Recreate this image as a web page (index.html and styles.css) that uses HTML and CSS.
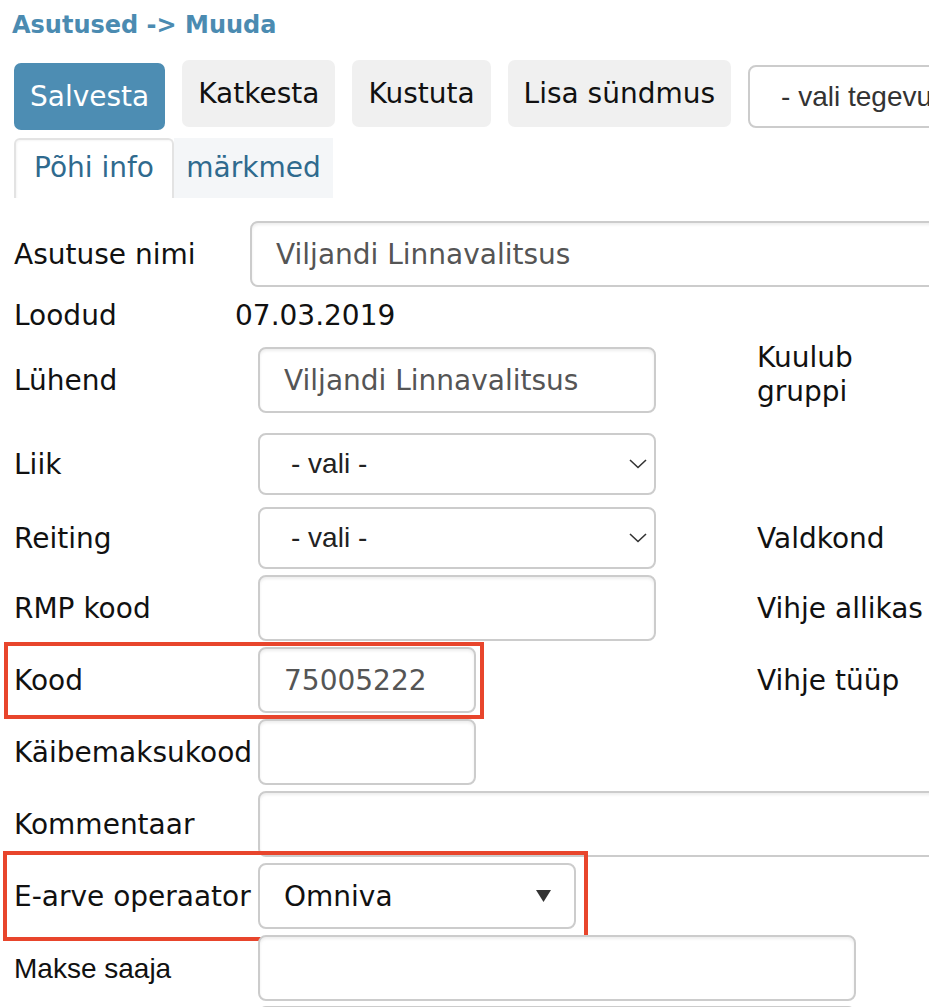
FILE: index.html
```html
<!DOCTYPE html>
<html lang="et">
<head>
<meta charset="utf-8">
<title>Asutused -&gt; Muuda</title>
<link rel="stylesheet" href="styles.css">
</head>
<body>
<div class="page">
  <h1 class="title">Asutused -&gt; Muuda</h1>

  <div class="toolbar">
    <div class="btn btn--primary">Salvesta</div>
    <div class="btn">Katkesta</div>
    <div class="btn">Kustuta</div>
    <div class="btn">Lisa sündmus</div>
    <div class="toolbar-select">- vali tegevus -</div>
  </div>

  <div class="tabs">
    <div class="tab tab--active">Põhi info</div>
    <div class="tab">märkmed</div>
  </div>

  <div class="form">
    <div class="row">
      <div class="label">Asutuse nimi</div>
      <div class="input input--name">Viljandi Linnavalitsus</div>
    </div>

    <div class="row row--plain">
      <div class="label label--up">Loodud</div>
      <div class="value">07.03.2019</div>
    </div>

    <div class="row">
      <div class="label">Lühend</div>
      <div class="input w-398">Viljandi Linnavalitsus</div>
      <div class="side side--top">Kuulub gruppi</div>
    </div>

    <div class="row row--sp20">
      <div class="label">Liik</div>
      <div class="select w-398">
        <span>- vali -</span>
        <svg class="chev" width="18" height="10" viewBox="0 0 18 10"><polyline points="1,1 9,8.5 17,1" fill="none" stroke="#333" stroke-width="1.6"/></svg>
      </div>
    </div>

    <div class="row row--sp12">
      <div class="label">Reiting</div>
      <div class="select w-398">
        <span>- vali -</span>
        <svg class="chev" width="18" height="10" viewBox="0 0 18 10"><polyline points="1,1 9,8.5 17,1" fill="none" stroke="#333" stroke-width="1.6"/></svg>
      </div>
      <div class="side">Valdkond</div>
    </div>

    <div class="row">
      <div class="label">RMP kood</div>
      <div class="input w-398"></div>
      <div class="side">Vihje allikas</div>
    </div>

    <div class="row">
      <div class="label">Kood</div>
      <div class="input w-218">75005222</div>
      <div class="side">Vihje tüüp</div>
      <div class="annot annot--kood"></div>
    </div>

    <div class="row">
      <div class="label">Käibemaksukood</div>
      <div class="input w-218"></div>
    </div>

    <div class="row">
      <div class="label">Kommentaar</div>
      <div class="input input--wide"></div>
    </div>

    <div class="row">
      <div class="label">E-arve operaator</div>
      <div class="select select--plain w-318">
        <span>Omniva</span>
        <svg class="tri" width="15" height="12" viewBox="0 0 15 12"><polygon points="0,0 15,0 7.5,12" fill="#333"/></svg>
      </div>
      <div class="annot annot--earve"></div>
    </div>

    <div class="row">
      <div class="label label--sans">Makse saaja</div>
      <div class="input w-598"></div>
    </div>

    <div class="row row--tight">
      <div class="label"></div>
      <div class="input w-598"></div>
    </div>
  </div>
</div>
</body>
</html>
```

FILE: styles.css
```css
* { box-sizing: border-box; }

html, body {
  margin: 0;
  padding: 0;
  overflow: hidden;
  background: #fff;
}

body {
  width: 929px;
  height: 1007px;
  font-family: "DejaVu Sans", Verdana, sans-serif;
  color: #111;
}

.page {
  padding-top: 11px;
}

.title {
  margin: 0 0 21px 12px;
  font-size: 24px;
  line-height: 28px;
  font-weight: bold;
  color: #4b8bb1;
}

.toolbar {
  display: flex;
  align-items: flex-start;
  gap: 17px;
  padding-left: 14px;
  white-space: nowrap;
}

.btn {
  flex: none;
  height: 67px;
  line-height: 67px;
  padding: 0 16px;
  font-size: 28px;
  border-radius: 7px;
  background: #f0f0f0;
  color: #111;
}

.btn--primary {
  margin-top: 3px;
  background: #4d8db3;
  color: #fff;
}

.toolbar-select {
  flex: none;
  margin-top: 5px;
  width: 320px;
  height: 63px;
  line-height: 59px;
  padding-left: 31px;
  border: 2px solid #ccc;
  border-radius: 8px;
  font-family: "Liberation Sans", Arial, sans-serif;
  font-size: 28px;
  color: #333;
}

.tabs {
  display: flex;
  margin: 8px 0 0 14px;
}

.tab {
  width: 159px;
  height: 60px;
  line-height: 60px;
  text-align: center;
  font-size: 28px;
  color: #2f6a8e;
  background: #f4f6f8;
}

.tab--active {
  width: 160px;
  background: #fff;
  border: 2px solid #e3e3e3;
  border-bottom: none;
  border-radius: 6px 6px 0 0;
  line-height: 56px;
  box-shadow: inset 1px 1px 2px rgba(0, 0, 0, 0.04);
}

.form {
  display: flex;
  flex-direction: column;
  gap: 6px;
  margin-top: 23px;
}

.row {
  position: relative;
  display: grid;
  grid-template-columns: 244px 499px 1fr;
  align-items: center;
  padding-left: 14px;
}

.row--plain { height: 48px; }
.row--sp20 { margin-top: 14px; }
.row--sp12 { margin-top: 6px; }
.row--tight { margin-top: -1px; }

.label {
  grid-column: 1;
  font-size: 28px;
  line-height: 33px;
  white-space: nowrap;
}

.label--up {
  margin-top: -4px;
}

.label--sans {
  font-family: "Liberation Sans", Arial, sans-serif;
}

.value {
  grid-column: 2;
  margin-left: -23px;
  margin-top: -4px;
  font-size: 28px;
  line-height: 33px;
}

.side {
  grid-column: 3;
  font-size: 28px;
  line-height: 33px;
}

.side--top {
  align-self: start;
  margin-top: -6px;
  line-height: 34px;
}

.input {
  grid-column: 2;
  display: flex;
  align-items: center;
  height: 66px;
  padding-left: 24px;
  border: 2px solid #ccc;
  border-radius: 8px;
  background: #fff;
  box-shadow: inset 0 2px 3px rgba(0, 0, 0, 0.07);
  font-size: 28px;
  color: #555;
  white-space: nowrap;
}

.input--name {
  width: 720px;
  margin-left: -8px;
}

.input--wide {
  width: 720px;
}

.w-218 { width: 218px; }
.w-318 { width: 318px; }
.w-398 { width: 398px; }
.w-598 { width: 598px; }

.select {
  grid-column: 2;
  display: flex;
  align-items: center;
  justify-content: space-between;
  height: 62px;
  padding: 0 7px 0 31px;
  border: 2px solid #ccc;
  border-radius: 8px;
  background: #fff;
  font-family: "Liberation Sans", Arial, sans-serif;
  font-size: 28px;
  color: #222;
}

.select--plain {
  height: 66px;
  padding: 0 23px 0 24px;
  font-family: "DejaVu Sans", Verdana, sans-serif;
  color: #111;
}

.chev, .tri {
  flex: none;
  display: block;
}

.annot {
  position: absolute;
  border: 4px solid #e8452c;
  pointer-events: none;
}

.annot--kood {
  left: 4px;
  top: -5px;
  width: 480px;
  height: 77px;
}

.annot--earve {
  left: 3px;
  top: -12px;
  width: 585px;
  height: 90px;
}
```
